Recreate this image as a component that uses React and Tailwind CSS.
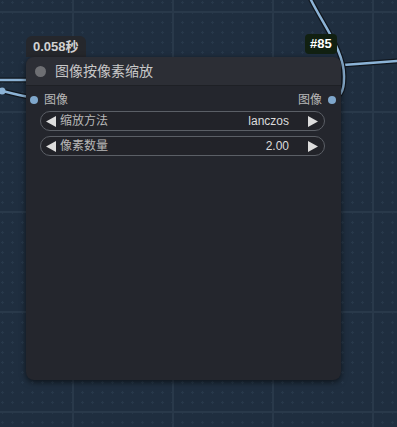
import React from 'react';

const CJK = 'font-["Liberation_Sans","Noto_Sans_CJK_SC",sans-serif]';

function Arrow({ dir }) {
  return (
    <svg width="10" height="11" viewBox="0 0 10 11" className="shrink-0">
      {dir === 'left' ? (
        <polygon points="10,0 10,11 0,5.5" fill="#dddddd" />
      ) : (
        <polygon points="0,0 0,11 10,5.5" fill="#dddddd" />
      )}
    </svg>
  );
}

function Widget({ label, value }) {
  return (
    <div className="h-5 rounded-full border border-[#5b5f66] bg-[#222329] flex items-center pl-[5px] pr-[6px] text-[12px]">
      <Arrow dir="left" />
      <span className="ml-[4px] text-[#b8b8b8]">{label}</span>
      <span className="ml-auto mr-[19px] text-[#dcdcdc]">{value}</span>
      <Arrow dir="right" />
    </div>
  );
}

function Canvas() {
  return (
    <svg className="absolute inset-0" width="397" height="427">
      <defs>
        <pattern id="dots" width="10" height="10" patternUnits="userSpaceOnUse" x="-3" y="-2">
          <rect x="5" y="3" width="1" height="3" fill="#27384a" />
          <rect x="4" y="4" width="3" height="1" fill="#27384a" />
        </pattern>
      </defs>
      <rect width="397" height="427" fill="#1f2e3f" />
      <rect width="397" height="427" fill="url(#dots)" />
      {[73, 173, 273, 373].map((x) => (
        <rect key={x} x={x - 1} y="0" width="2" height="427" fill="#29394a" />
      ))}
      {[12, 112, 212, 312, 412].map((y) => (
        <rect key={y} x="0" y={y - 1} width="397" height="2" fill="#29394a" />
      ))}
      {/* links */}
      <g fill="none" strokeLinecap="round">
        <path d="M0 80 L30 80" stroke="#10161d" strokeWidth="5" />
        <path d="M0 80 L30 80" stroke="#8cb3d6" strokeWidth="2.5" />
        <path d="M2 91 C12 93 20 96 30 97" stroke="#10161d" strokeWidth="5" />
        <path d="M2 91 C12 93 20 96 30 97" stroke="#8cb3d6" strokeWidth="2.5" />
        <path d="M343 65 L397 61" stroke="#10161d" strokeWidth="5" />
        <path d="M343 65 L397 61" stroke="#8cb3d6" strokeWidth="2.5" />
        <path d="M311 0 C325 28 345 52 344 78 C344 92 340 98 331 99" stroke="#10161d" strokeWidth="5" />
        <path d="M311 0 C325 28 345 52 344 78 C344 92 340 98 331 99" stroke="#8cb3d6" strokeWidth="2.5" />
      </g>
      <circle cx="2" cy="91" r="3.5" fill="#8cb3d6" />
    </svg>
  );
}

export default function App() {
  return (
    <div className={`relative w-[397px] h-[427px] overflow-hidden ${CJK}`}>
      <Canvas />

      {/* timing badge */}
      <div className="absolute left-[26px] top-[36px] h-[21px] px-[7px] rounded-t-[6px] bg-[#25272c] text-[#d2d2d2] text-[13px] font-bold flex items-center">
        0.058秒
      </div>

      {/* node */}
      <div className="absolute left-[26px] top-[57px] w-[315px] h-[323px] rounded-[8px] bg-[#24262d] shadow-[0_2px_6px_rgba(0,0,0,0.6)] flex flex-col">
        <div className="h-[29px] rounded-t-[8px] bg-[#2c2e35] border-b border-[#1e2025] flex items-center pl-[9px]">
          <span className="w-[11px] h-[11px] rounded-full bg-[#6e6f73]" />
          <span className="ml-[9px] text-[14px] text-[#c8c8c8]">图像按像素缩放</span>
        </div>
        <div className="flex items-center justify-between h-[25px] pt-[2px] pl-[4px] pr-[5px] text-[12px] text-[#b8b8b8]">
          <div className="flex items-center gap-[6px]">
            <span className="w-[8px] h-[8px] rounded-full bg-[#7fa7cc]" />
            <span>图像</span>
          </div>
          <div className="flex items-center gap-[6px]">
            <span>图像</span>
            <span className="w-[8px] h-[8px] rounded-full bg-[#7fa7cc]" />
          </div>
        </div>
        <div className="flex flex-col gap-[5px] pl-[14px] pr-[16px]">
          <Widget label="缩放方法" value="lanczos" />
          <Widget label="像素数量" value="2.00" />
        </div>
      </div>

      {/* id badge */}
      <div className="absolute left-[305px] top-[34px] h-[20px] px-[5px] rounded-[4px] bg-[#112011] text-white text-[13px] font-bold flex items-center">
        #85
      </div>
    </div>
  );
}
